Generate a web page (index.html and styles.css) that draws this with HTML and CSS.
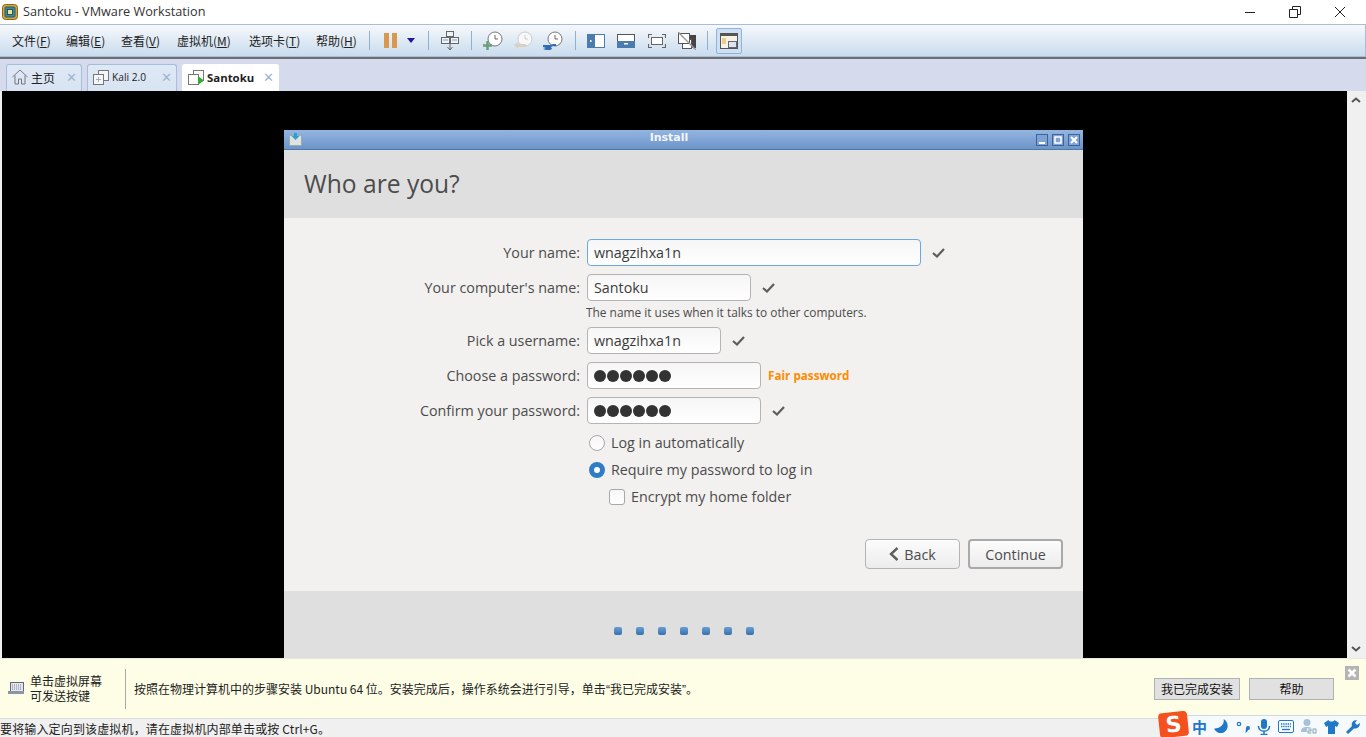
FILE: index.html
```html
<!DOCTYPE html>
<html lang="en">

<head>
    <meta charset="UTF-8">
    <title>Santoku - VMware Workstation</title>
    <link rel="stylesheet" href="styles.css">
</head>

<body>
    <!-- Host title bar -->
    <header class="titlebar">
        <svg class="app-icon" width="16" height="16" viewBox="0 0 16 16">
            <rect x="0.5" y="0.5" width="15" height="15" rx="3" fill="#e0a030" stroke="#8a6a20"/>
            <rect x="3" y="3" width="10" height="10" rx="1" fill="#2f8f9f" stroke="#1e5f70"/>
            <rect x="5.5" y="5.5" width="5" height="5" fill="#f0e0a0" stroke="#333" stroke-width="0.8"/>
        </svg>
        <span class="app-title">Santoku - VMware Workstation</span>
        <div class="win-controls">
            <svg width="14" height="14" viewBox="0 0 14 14"><path d="M2 7.500h10" stroke="#222" fill="none"/></svg>
            <svg width="14" height="14" viewBox="0 0 14 14"><path d="M1.500 4.500h8v8h-8zM4.500 4.500v-3h8v8h-3" stroke="#222" fill="none"/></svg>
            <svg width="14" height="14" viewBox="0 0 14 14"><path d="M2 2l10 10M12 2L2 12" stroke="#222" fill="none"/></svg>
        </div>
    </header>

    <!-- Menu and toolbar -->
    <nav class="toolbar">
        <span class="menu-item m1">文件(<u>F</u>)</span>
        <span class="menu-item m2">编辑(<u>E</u>)</span>
        <span class="menu-item m3">查看(<u>V</u>)</span>
        <span class="menu-item m4">虚拟机(<u>M</u>)</span>
        <span class="menu-item m5">选项卡(<u>T</u>)</span>
        <span class="menu-item m6">帮助(<u>H</u>)</span>
        <i class="sep"></i>
        <span class="pause"><b></b><b></b></span>
        <span class="drop"></span>
        <i class="sep s2"></i>
        <svg class="tool t-send" width="20" height="20" viewBox="0 0 20 20" fill="#eef2f6" stroke="#666">
            <rect x="6.500" y="0.500" width="7" height="5"/><rect x="1.500" y="6.500" width="8" height="6"/><rect x="10.500" y="6.500" width="8" height="6"/>
            <path d="M3 9h5M12 9h5" stroke="#7aa0c8"/><path d="M10 13v5M7.500 16l2.500 3 2.500-3" fill="none"/>
        </svg>
        <i class="sep s3"></i>
        <svg class="tool t-clock1" width="20" height="20" viewBox="0 0 20 20">
            <circle cx="12" cy="8" r="7" fill="#fff" stroke="#777"/><path d="M12 4v4h3" fill="none" stroke="#666"/>
            <path d="M4.500 10v9M0 14.500h9" stroke="#6a9f7a" stroke-width="2.500"/>
        </svg>
        <svg class="tool t-clock2" width="20" height="20" viewBox="0 0 20 20">
            <circle cx="12" cy="8" r="7" fill="#f8f8f8" stroke="#ccc"/><path d="M12 4v4h3" fill="none" stroke="#ccc"/>
            <path d="M1 14l4-3v2h8v3H5v2z" fill="#dcd0c0"/>
        </svg>
        <svg class="tool t-clock3" width="20" height="20" viewBox="0 0 20 20">
            <circle cx="12" cy="8" r="7" fill="#fff" stroke="#777"/><path d="M12 4v4h3" fill="none" stroke="#666"/>
            <path d="M0 14h8l2-1h3v2h-3l-2 1 1 2-2 1H3l-3-1 3-1-3-1z" fill="#2f6cb0"/>
        </svg>
        <i class="sep s4"></i>
        <svg class="tool t-v1" width="18" height="14" viewBox="0 0 18 14">
            <rect x="0.500" y="0.500" width="17" height="13" fill="#fff" stroke="#4a7cb0"/><rect width="8" height="14" fill="#4a7cb0"/><rect x="3" y="6" width="1.500" height="2" fill="#fff"/>
        </svg>
        <svg class="tool t-v2" width="18" height="14" viewBox="0 0 18 14">
            <rect x="0.500" y="0.500" width="17" height="13" fill="#fff" stroke="#555"/><rect y="7" width="18" height="7" fill="#4a7cb0"/><rect x="7" y="9" width="4" height="1.500" fill="#fff"/>
        </svg>
        <svg class="tool t-v3" width="18" height="14" viewBox="0 0 18 14" fill="none" stroke="#666">
            <rect x="3.500" y="3.500" width="11" height="7" fill="#fff"/><path d="M0.500 4V0.500H4M14 0.500h3.500V4M0.500 10v3.500H4M14 13.500h3.500V10" stroke-width="1.200"/>
        </svg>
        <svg class="tool t-v4" width="18" height="18" viewBox="0 0 18 18">
            <rect x="6.500" y="3.500" width="11" height="12" fill="#444" stroke="#444"/><rect x="4.500" y="7.500" width="9" height="9" fill="#fff" stroke="#555"/>
            <rect x="0.500" y="1.500" width="11" height="10" fill="#fff" stroke="#555"/><path d="M0 0l18 18" stroke="#9a9aa0" stroke-width="1.500"/>
        </svg>
        <i class="sep s5"></i>
        <span class="tool-active">
            <svg width="18" height="16" viewBox="0 0 18 16">
                <rect x="0.500" y="0.500" width="17" height="15" fill="#f6f2e6" stroke="#555"/><rect width="18" height="3" fill="#555"/>
                <path d="M2 6h4M2 8h4M2 10h4" stroke="#e0a840"/><rect x="8.500" y="8.500" width="8" height="6" fill="#dde4ee" stroke="#667"/>
            </svg>
        </span>
    </nav>

    <!-- Tabs -->
    <div class="tabstrip">
        <div class="tab tab-home">
            <svg width="16" height="16" viewBox="0 0 16 16" fill="none" stroke="#777"><path d="M0.500 8L8 1l7.500 7M3 6.500v8.500h3.500v-5h3v5H13V6.500"/></svg>
            <span class="tab-label">主页</span><span class="tab-x">✕</span>
        </div>
        <div class="tab tab-kali">
            <svg width="16" height="16" viewBox="0 0 16 16" fill="#f4f6fa" stroke="#777"><rect x="5.500" y="1.500" width="10" height="10"/><rect x="0.500" y="5.500" width="10" height="10"/><path d="M5.500 8v5M3 10.500h5" stroke="#aaa"/></svg>
            <span class="tab-label small">Kali 2.0</span><span class="tab-x">✕</span>
        </div>
        <div class="tab tab-santoku">
            <svg width="16" height="16" viewBox="0 0 16 16" fill="#fff" stroke="#777"><rect x="5.500" y="1.500" width="10" height="10"/><rect x="0.500" y="5.500" width="10" height="10"/><path d="M10 7l6 4.500-6 4.500z" fill="#35a835" stroke="none"/></svg>
            <span class="tab-label bold">Santoku</span><span class="tab-x">✕</span>
        </div>
    </div>

    <!-- VM screen -->
    <main class="vm-area">
        <div class="vm-screen">
            <section class="guest">
                <div class="guest-title">
                    <svg class="guest-icon" width="13" height="13" viewBox="0 0 13 13">
                        <rect x="0.500" y="2.500" width="12" height="10" rx="1" fill="#dfe3e0" stroke="#9aa"/>
                        <path d="M5 0h3v3h2.500L6.500 7 2.500 3H5z" fill="#2a9fd8"/>
                    </svg>
                    <span class="guest-title-text">Install</span>
                    <div class="guest-btns">
                        <span class="gbtn"><svg width="8" height="8" viewBox="0 0 8 8"><rect x="1" y="6" width="6" height="2" fill="#fff"/></svg></span>
                        <span class="gbtn"><svg width="8" height="8" viewBox="0 0 8 8"><rect x="1" y="1" width="6" height="6" fill="none" stroke="#fff" stroke-width="1.500"/></svg></span>
                        <span class="gbtn"><svg width="8" height="8" viewBox="0 0 8 8"><path d="M1 1l6 6M7 1L1 7" stroke="#fff" stroke-width="2"/></svg></span>
                    </div>
                </div>
                <div class="guest-head">Who are you?</div>
                <div class="guest-body">
                    <div class="form-row">
                        <label>Your name:</label>
                        <div class="entry focus w-name">wnagzihxa1n</div>
                        <svg class="tick" width="13" height="10" viewBox="0 0 13 10"><path d="M1 5l4 3.500L12 1" fill="none" stroke="#5d5d5d" stroke-width="2.200"/></svg>
                    </div>
                    <div class="form-row">
                        <label>Your computer's name:</label>
                        <div class="entry w-comp">Santoku</div>
                        <svg class="tick" width="13" height="10" viewBox="0 0 13 10"><path d="M1 5l4 3.500L12 1" fill="none" stroke="#5d5d5d" stroke-width="2.200"/></svg>
                    </div>
                    <div class="form-hint">The name it uses when it talks to other computers.</div>
                    <div class="form-row">
                        <label>Pick a username:</label>
                        <div class="entry w-user">wnagzihxa1n</div>
                        <svg class="tick" width="13" height="10" viewBox="0 0 13 10"><path d="M1 5l4 3.500L12 1" fill="none" stroke="#5d5d5d" stroke-width="2.200"/></svg>
                    </div>
                    <div class="form-row">
                        <label>Choose a password:</label>
                        <div class="entry w-pass"><span class="dots"><b></b><b></b><b></b><b></b><b></b><b></b></span></div>
                        <span class="strength">Fair password</span>
                    </div>
                    <div class="form-row">
                        <label>Confirm your password:</label>
                        <div class="entry w-pass"><span class="dots"><b></b><b></b><b></b><b></b><b></b><b></b></span></div>
                        <svg class="tick" width="13" height="10" viewBox="0 0 13 10"><path d="M1 5l4 3.500L12 1" fill="none" stroke="#5d5d5d" stroke-width="2.200"/></svg>
                    </div>
                    <div class="opt opt-first"><span class="radio"></span>Log in automatically</div>
                    <div class="opt"><span class="radio on"></span>Require my password to log in</div>
                    <div class="opt opt-sub"><span class="check"></span>Encrypt my home folder</div>
                    <div class="actions">
                        <span class="btn">
                            <svg width="10" height="14" viewBox="0 0 10 14"><path d="M8.500 1L2 7l6.500 6" fill="none" stroke="#5d5d5d" stroke-width="2.400"/></svg>
                            Back
                        </span>
                        <span class="btn btn-default">Continue</span>
                    </div>
                </div>
                <div class="guest-foot">
                    <i></i><i></i><i></i><i></i><i></i><i></i><i></i>
                </div>
            </section>
        </div>
        <div class="scrollbar">
            <svg width="10" height="6" viewBox="0 0 10 6"><path d="M1 5l4-3.500L9 5" fill="none" stroke="#555" stroke-width="2"/></svg>
            <svg width="10" height="6" viewBox="0 0 10 6"><path d="M1 1l4 3.500L9 1" fill="none" stroke="#555" stroke-width="2"/></svg>
        </div>
    </main>

    <!-- Install hint -->
    <div class="hintbar">
        <svg class="kbd" width="16" height="13" viewBox="0 0 16 13">
            <rect x="2.500" y="0.500" width="13" height="9" fill="#dfe6ee" stroke="#667"/>
            <path d="M4 3h10M4 5h10M4 7h10" stroke="#889" stroke-dasharray="1 1"/>
            <rect x="0" y="9" width="16" height="3" fill="#8a96a6"/>
        </svg>
        <div class="hint-side">单击虚拟屏幕<br>可发送按键</div>
        <div class="hint-text">按照在物理计算机中的步骤安装 Ubuntu 64 位。安装完成后，操作系统会进行引导，单击<span class="quote">“</span>我已完成安装<span class="quote">”</span>。</div>
        <span class="hint-btn first">我已完成安装</span>
        <span class="hint-btn second">帮助</span>
        <span class="hint-close">
            <svg width="10" height="10" viewBox="0 0 10 10"><path d="M1.500 1.500l7 7M8.500 1.500l-7 7" stroke="#fff" stroke-width="2.600"/></svg>
        </span>
    </div>

    <!-- Status bar -->
    <footer class="statusbar">
        <span>要将输入定向到该虚拟机，请在虚拟机内部单击或按 Ctrl+G。</span>
    </footer>

    <!-- Input method bar, floats over the status bar -->
    <div class="ime">
        <span class="ime-logo">S</span>
        <span class="ime-zh">中</span>
        <svg width="15" height="15" viewBox="0 0 14 14"><path d="M9 0c1 5-3 9-9 9 2 4 8 6 11 2 3-3 2-9-2-11z" fill="#1f78c8"/></svg>
        <svg width="14" height="14" viewBox="0 0 14 14"><circle cx="3" cy="4" r="1.700" fill="none" stroke="#1f78c8" stroke-width="1.200"/><path d="M10 8a2 2 0 1 1 2 2c0 1-1 2-2.500 3" fill="#1f78c8"/></svg>
        <svg width="14" height="16" viewBox="0 0 14 16"><rect x="4" y="0" width="6" height="10" rx="3" fill="#1f78c8"/><path d="M1.500 7c0 7 11 7 11 0M7 12v3M3.500 15.500h7" fill="none" stroke="#1f78c8" stroke-width="1.500"/></svg>
        <svg width="16" height="13" viewBox="0 0 16 13"><rect x="0.500" y="0.500" width="15" height="12" rx="1.500" fill="#fff" stroke="#1f78c8"/><path d="M3 4h10M3 6.500h10" stroke="#1f78c8" stroke-width="1.400" stroke-dasharray="1.400 .8"/><path d="M4 9.500h8" stroke="#1f78c8" stroke-width="1.400"/></svg>
        <svg width="16" height="15" viewBox="0 0 16 15"><circle cx="6" cy="3.500" r="3.500" fill="#a8c0d8"/><path d="M0 13c0-4 2-5 6-5s6 1 6 5z" fill="#a8c0d8"/><rect x="6" y="9" width="10" height="6" fill="#e8eef4"/><path d="M7 10h3v2H7v2h3M12 10h3v4h-3z" fill="none" stroke="#8aa" stroke-width="0.900"/></svg>
        <svg width="15" height="14" viewBox="0 0 15 14"><path d="M4.500 0L0 3l2 4 2-1v8h7V6l2 1 2-4-4.500-3C10 2 5 2 4.500 0z" fill="#1f78c8"/></svg>
        <svg width="14" height="14" viewBox="0 0 14 14"><path d="M0 12l6-6C5 3 7 0 11 0L9 3l2 2 3-2c0 4-3 6-6 5.500L2 14z" fill="#1f78c8"/></svg>
    </div>
</body>

</html>
```

FILE: styles.css
```css
* {
    box-sizing: border-box;
}

html,
body {
    margin: 0;
    padding: 0;
    height: 737px;
    overflow: hidden;
}

body {
    font-family: "Noto Sans CJK SC", "Noto Sans", sans-serif;
    font-size: 12px;
    color: #222;
    background: #fff;
    display: flex;
    flex-direction: column;
    position: relative;
}

/* host window */
.titlebar {
    height: 24px;
    display: flex;
    align-items: center;
    padding: 0 0 1px 2px;
    background: #fff;
}

.app-icon {
    margin-right: 5px;
}

.app-title {
    font-family: "Open Sans", sans-serif;
    font-size: 12.700px;
    color: #333;
    margin-bottom: 1px;
}

.win-controls {
    margin-left: auto;
    display: flex;
    gap: 31px;
    padding-right: 19px;
}

.toolbar {
    height: 33px;
    display: flex;
    align-items: center;
    background: linear-gradient(#f6f8fb, #c9dcee);
    border: 1px solid #a5bfdb;
    border-left: 0;
    font-size: 12px;
    color: #222;
}

.menu-item u {
    text-decoration: underline;
}

.menu-item {
    flex: none;
    white-space: nowrap;
}

.m1 { margin-left: 12px; width: 54px; }
.m2 { width: 55px; }
.m3 { width: 56px; }
.m4 { width: 72px; }
.m5 { width: 67px; }
.m6 { width: 53px; }

.sep {
    flex: none;
    width: 1px;
    height: 19px;
    background: #8eb0d2;
}

.pause {
    display: flex;
    gap: 3px;
    margin-left: 14px;
}

.pause b {
    width: 5px;
    height: 15px;
    background: #d89850;
}

.drop {
    margin-left: 10px;
    width: 0;
    height: 0;
    border: 4px solid transparent;
    border-top: 5px solid #1a1a9a;
    border-bottom: 0;
}

.s2 { margin-left: 13px; }

.tool {
    flex: none;
}

.t-send { margin-left: 11px; }
.s3 { margin-left: 11px; }
.t-clock1 { margin-left: 11px; }
.t-clock2 { margin-left: 10px; }
.t-clock3 { margin-left: 10px; }
.s4 { margin-left: 12px; }
.t-v1 { margin-left: 11px; }
.t-v2 { margin-left: 12px; }
.t-v3 { margin-left: 13px; }
.t-v4 { margin-left: 12px; }
.s5 { margin-left: 11px; }

.tool-active {
    margin-left: 8px;
    width: 26px;
    height: 26px;
    display: flex;
    align-items: center;
    justify-content: center;
    background: #cfe0f3;
    border: 1px solid #8db2dc;
    border-radius: 2px;
}

.tabstrip {
    height: 34px;
    display: flex;
    align-items: flex-end;
    padding-left: 6px;
    gap: 5px;
    background: #d5dbec;
    border-top: 2px solid #6e6e6e;
}

.tab {
    height: 27px;
    display: flex;
    align-items: center;
    padding: 0 0 2px 5px;
    background: linear-gradient(#dfe8f5, #d8e4f3);
    border: 1px solid #a5bfdb;
    border-bottom: 0;
    border-radius: 3px 3px 0 0;
}

.tab-home { width: 76px; }
.tab-kali { width: 90px; }
.tab-santoku { width: 97px; background: #fff; border-color: #fff; }

.tab-label {
    margin-left: 3px;
    font-size: 12px;
    color: #222;
}

.tab-label.small {
    font-family: "Open Sans", sans-serif;
    font-size: 10.200px;
}

.tab-label.bold {
    font-family: "Open Sans", sans-serif;
    font-size: 11.400px;
    font-weight: 700;
}

.tab-x {
    margin-left: auto;
    margin-right: 4px;
    color: #9db5d0;
    font-family: "DejaVu Sans", sans-serif;
    font-size: 13px;
    font-weight: 700;
}

/* vm display */
.vm-area {
    height: 567px;
    display: flex;
    background: #f0f0f0;
    padding: 0 2px;
}

.vm-screen {
    flex: 1;
    background: #000;
    position: relative;
    overflow: hidden;
}

.scrollbar {
    width: 17px;
    display: flex;
    flex-direction: column;
    justify-content: space-between;
    align-items: center;
    padding: 6px 0 6px;
}

/* guest installer window, sits on the black vm screen */
.guest {
    position: absolute;
    left: 282px;
    top: 39px;
    width: 799px;
    height: 528px;
    display: flex;
    flex-direction: column;
    background: #f2f1f0;
    font-family: "Open Sans", sans-serif;
    color: #4c4c4c;
}

.guest-title {
    height: 20px;
    flex: none;
    display: flex;
    align-items: center;
    position: relative;
    background: linear-gradient(#93b5e1, #6d94c8);
    border-bottom: 1px solid #4f78ad;
    padding-left: 5px;
}

.guest-title-text {
    position: absolute;
    left: 0;
    right: 29px;
    top: 1px;
    text-align: center;
    font-family: "DejaVu Sans", sans-serif;
    font-size: 11px;
    font-weight: 700;
    color: #f2f5fa;
}

.guest-btns {
    margin-left: auto;
    display: flex;
    gap: 4px;
    padding-right: 3px;
    position: relative;
}

.gbtn {
    width: 12px;
    height: 12px;
    display: flex;
    align-items: center;
    justify-content: center;
    background: #7fa3d3;
    border: 1px solid #3d6496;
}

.guest-head {
    height: 68px;
    flex: none;
    display: flex;
    align-items: center;
    padding: 0 0 1px 20px;
    background: #dfdfdf;
    font-size: 24.600px;
    color: #4c4c4c;
}

.guest-body {
    flex: 1;
    padding-top: 21px;
    font-size: 14.300px;
}

.form-row {
    display: flex;
    align-items: center;
    height: 27px;
    margin-bottom: 8px;
}

.form-row label {
    width: 296px;
    margin-right: 7px;
    flex: none;
    text-align: right;
}

.entry {
    height: 27px;
    padding: 0 6px;
    display: flex;
    align-items: center;
    background: linear-gradient(#f6f6f6, #fff);
    border: 1px solid #b4b4b4;
    border-radius: 4px;
    font-size: 14.300px;
    color: #3c3c3c;
}

.entry.focus {
    border-color: #6aa9e4;
}

.w-name { width: 334px; }
.w-comp { width: 164px; }
.w-user { width: 134px; }
.w-pass { width: 174px; }

.tick {
    margin-left: 11px;
}

.form-hint {
    margin: -4px 0 0 302px;
    height: 22px;
    font-size: 11.900px;
    line-height: 15px;
}

.dots {
    display: flex;
    gap: 1px;
}

.dots b {
    width: 12px;
    height: 12px;
    border-radius: 50%;
    background: #333;
}

.strength {
    margin: 0 0 2px 7px;
    font-size: 11.700px;
    font-weight: 700;
    color: #ff8c00;
}

.opt {
    height: 27px;
    display: flex;
    align-items: center;
    padding-left: 305px;
}

.opt-first {
    margin-top: -3px;
}

.opt-sub {
    padding-left: 325px;
}

.radio,
.check {
    flex: none;
    width: 16px;
    height: 16px;
    margin-right: 6px;
    background: linear-gradient(#f6f6f6, #fff);
    border: 1px solid #a8a8a8;
    border-radius: 50%;
}

.radio.on {
    background: #fff;
    border: 5px solid #2f7dc4;
}

.check {
    border-radius: 3px;
}

.actions {
    display: flex;
    justify-content: flex-end;
    gap: 8px;
    padding: 29px 20px 0 0;
}

.btn {
    width: 95px;
    height: 30px;
    display: flex;
    align-items: center;
    justify-content: center;
    gap: 5px;
    background: linear-gradient(#fcfcfc, #ececec);
    border: 1px solid #b4b4b4;
    border-radius: 4px;
}

.btn-default {
    border: 2px solid #a9a9a9;
}

.guest-foot {
    height: 67px;
    flex: none;
    display: flex;
    align-items: center;
    justify-content: center;
    gap: 14px;
    padding-top: 13px;
    background: #dfdfdf;
}

.guest-foot i {
    width: 8px;
    height: 8px;
    border-radius: 2px;
    background: linear-gradient(#6a9dd0, #3672ac);
}

/* bottom strips */
.hintbar {
    height: 60px;
    display: flex;
    align-items: center;
    position: relative;
    background: #fefee6;
    border-top: 1px solid #e8e8e0;
    padding-left: 8px;
}

.kbd {
    flex: none;
    margin-right: 6px;
}

.hint-side {
    width: 96px;
    height: 40px;
    flex: none;
    padding-top: 4px;
    line-height: 15px;
    border-right: 1px solid #a8a8a8;
    font-size: 12px;
    color: #222;
}

.hint-text {
    margin-left: 8px;
    flex: 1;
    font-size: 12px;
    color: #222;
    white-space: nowrap;
}

.quote {
    font-family: "Liberation Sans", sans-serif;
}

.hint-btn {
    flex: none;
    height: 22px;
    display: flex;
    align-items: center;
    justify-content: center;
    background: #e1e1e1;
    border: 1px solid #adb2b5;
    font-size: 12px;
    color: #111;
}

.hint-btn.first { width: 86px; margin-right: 9px; }
.hint-btn.second { width: 85px; margin-right: 32px; }

.hint-close {
    position: absolute;
    right: 7px;
    top: 7px;
    width: 14px;
    height: 14px;
    display: flex;
    align-items: center;
    justify-content: center;
    background: #b4b4b4;
}

.statusbar {
    flex: 1;
    display: flex;
    align-items: center;
    background: #f0f0f0;
    border-top: 1px solid #dcdcdc;
    font-size: 12px;
    letter-spacing: 0.150px;
    color: #222;
}

/* sogou input bar over the status bar */
.ime {
    position: absolute;
    right: 0;
    bottom: 0;
    width: 207px;
    height: 22px;
    display: flex;
    align-items: center;
    gap: 7px;
    padding-left: 33px;
    background: #f6fafd;
    border-top: 1px solid #cfd9e4;
}

.ime-logo {
    position: absolute;
    left: 0;
    top: -4px;
    width: 29px;
    height: 25px;
    display: flex;
    align-items: center;
    justify-content: center;
    background: #f4511e;
    border-radius: 4px;
    transform: rotate(-6deg);
    font-family: "DejaVu Sans", sans-serif;
    font-size: 22px;
    font-weight: 700;
    color: #fff;
}

.ime-zh {
    font-size: 15px;
    font-weight: 700;
    color: #1f78c8;
}
```
